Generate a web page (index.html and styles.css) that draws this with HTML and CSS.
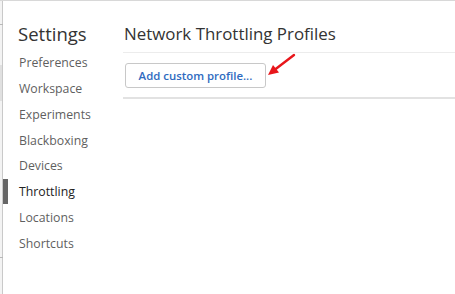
FILE: index.html
```html
<!DOCTYPE html>
<html>
<head>
<meta charset="utf-8">
<link rel="stylesheet" href="styles.css">
</head>
<body>
<div class="frame">
  <div class="edge">
    <span class="tick tick-top"></span>
    <span class="shade"></span>
    <span class="tick tick-bottom"></span>
  </div>
  <div class="window">
    <nav class="sidebar">
      <h1 class="title">Settings</h1>
      <ul class="nav">
        <li class="item">Preferences</li>
        <li class="item">Workspace</li>
        <li class="item">Experiments</li>
        <li class="item">Blackboxing</li>
        <li class="item">Devices</li>
        <li class="item selected">Throttling</li>
        <li class="item">Locations</li>
        <li class="item">Shortcuts</li>
      </ul>
    </nav>
    <main class="content">
      <h2 class="heading">Network Throttling Profiles</h2>
      <div class="toolbar">
        <button class="add-btn">Add custom profile...</button>
        <svg class="arrow" width="30" height="26" viewBox="0 0 30 26">
          <path d="M28 2 L9 16.5" stroke="#e8161b" stroke-width="2.4" stroke-linecap="round" fill="none"/>
          <path d="M2 22 L7 12 L13 19.5 Z" fill="#e8161b"/>
        </svg>
      </div>
    </main>
  </div>
</div>
</body>
</html>
```

FILE: styles.css
```css
html, body {
  margin: 0;
  padding: 0;
  background: #ffffff;
}
body {
  width: 455px;
  height: 294px;
  overflow: hidden;
  font-family: "Open Sans", "Noto Sans", sans-serif;
}
.frame {
  display: flex;
  height: 294px;
  border-top: 1px solid #d8d8d8;
  box-sizing: border-box;
}
.edge {
  position: relative;
  width: 2px;
  flex: none;
  background: #f3f3f3;
  border-right: 1px solid #c9c9c9;
}
.tick {
  position: absolute;
  left: 0;
  width: 3px;
  height: 1px;
  background: #b8b8b8;
}
.tick-top { top: 23px; }
.tick-bottom { top: 256px; }
.shade {
  position: absolute;
  left: 0;
  top: 64px;
  width: 2px;
  height: 36px;
  background: #e0e0e0;
}
.window {
  flex: 1;
  display: flex;
}
.sidebar {
  width: 120px;
  flex: none;
  padding-top: 18px;
}
.title {
  margin: 0 0 1px 15px;
  font-size: 18.5px;
  font-weight: 400;
  color: #333;
  line-height: 30px;
}
.nav {
  list-style: none;
  margin: 0;
  padding: 0;
}
.item {
  position: relative;
  padding-left: 16px;
  height: 25.86px;
  line-height: 25.86px;
  font-size: 12.3px;
  color: #5f5f5f;
}
.item.selected {
  color: #222;
}
.item.selected::before {
  content: "";
  position: absolute;
  left: 0;
  top: 0;
  width: 5px;
  height: 25px;
  background: #666;
}
.content {
  flex: 1;
  padding-top: 20px;
}
.heading {
  margin: 0;
  padding: 0 0 6px 1px;
  font-size: 16.9px;
  font-weight: 400;
  color: #333;
  line-height: 25px;
  border-bottom: 1px solid #ececec;
}
.toolbar {
  position: relative;
  display: flex;
  padding: 10px 0 9px 2px;
  border-bottom: 2px solid #e2e2e2;
}
.add-btn {
  height: 25px;
  width: 141px;
  padding: 0;
  border: 1px solid #c8c8c8;
  border-radius: 3px;
  background: #fff;
  color: #2f6bbf;
  font-family: "Open Sans", "Noto Sans", sans-serif;
  font-size: 11.4px;
  font-weight: 600;
}
.arrow {
  position: absolute;
  left: 143px;
  top: 0;
}
```
